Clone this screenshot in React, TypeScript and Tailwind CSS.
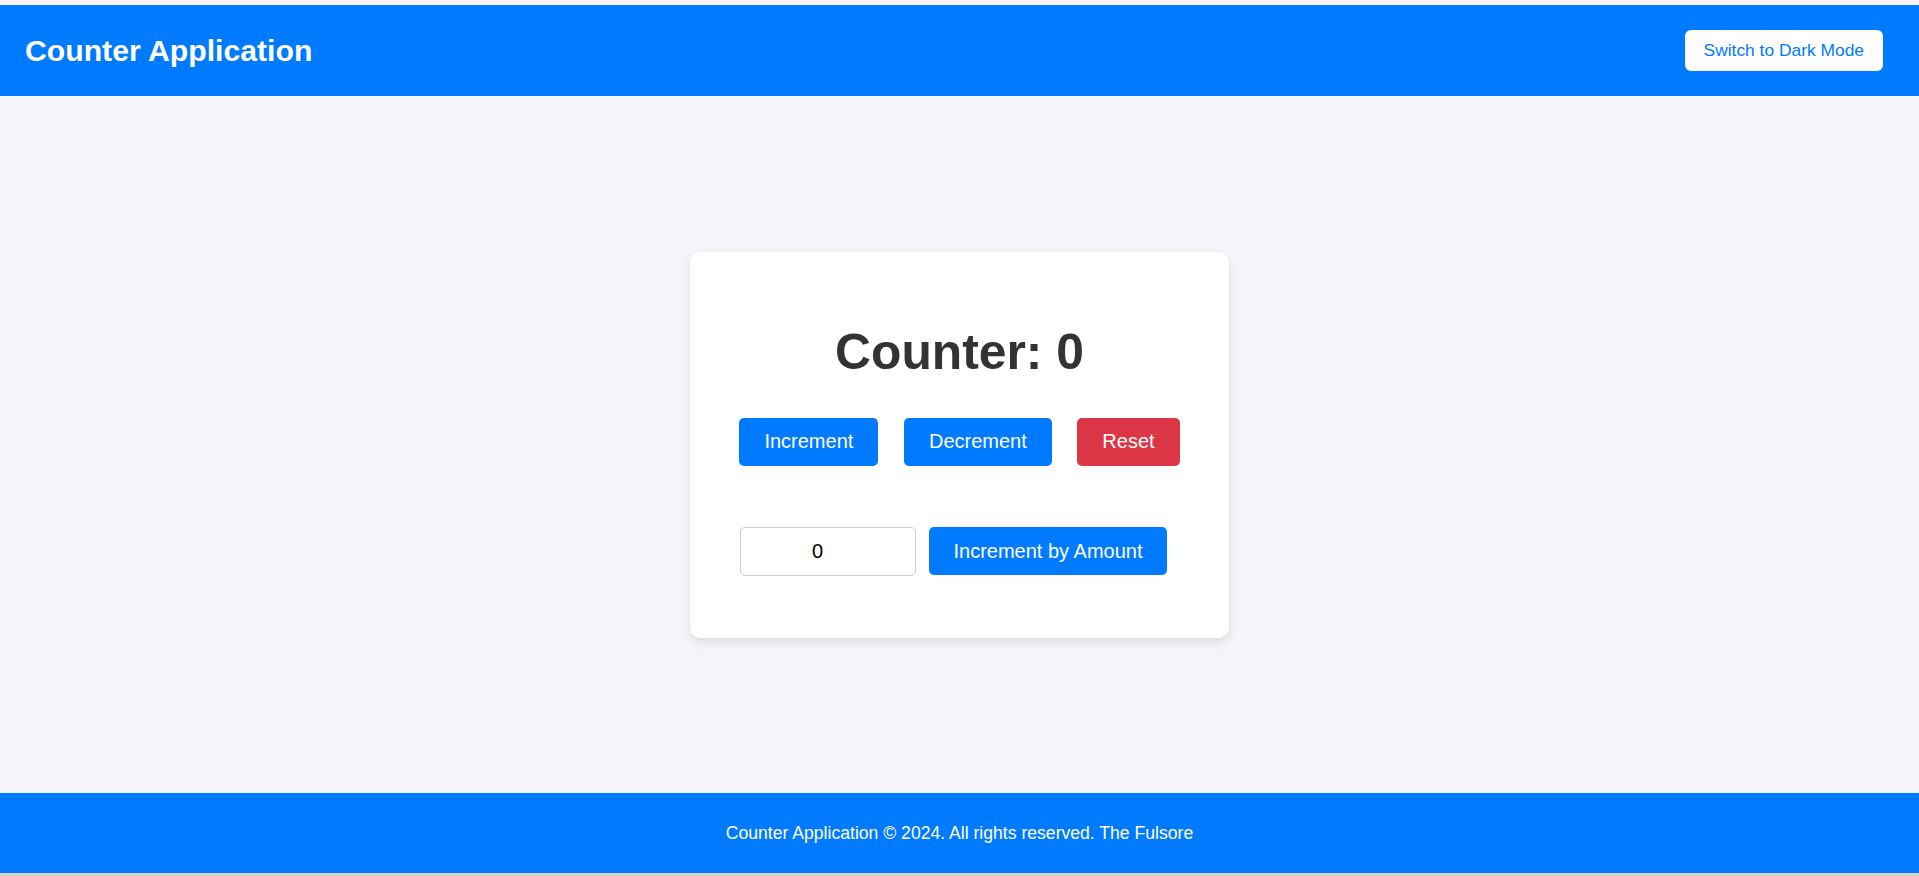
import React, { useState } from 'react';

const App: React.FC = () => {
  const [count, setCount] = useState(0);
  const [amount, setAmount] = useState('0');
  const [darkMode, setDarkMode] = useState(false);

  const font = { fontFamily: '"Liberation Sans", Arial, sans-serif' };

  return (
    <div style={font} className="flex h-screen min-h-[876px] flex-col bg-[#f4f4f9]">
      <div className="h-[5px] shrink-0 bg-[#fdf3f8]" />

      <header className="flex h-[91px] shrink-0 items-center justify-between bg-[#007bff] pl-[25px] pr-[36px]">
        <h1 className="text-[30.2px] font-bold leading-[34px] text-white">Counter Application</h1>
        <button
          onClick={() => setDarkMode(!darkMode)}
          className="rounded-[6px] bg-white px-[19px] py-[10px] text-[17.4px] leading-[21px] text-[#007bff]"
        >
          {darkMode ? 'Switch to Light Mode' : 'Switch to Dark Mode'}
        </button>
      </header>

      <main className="flex flex-1 items-center justify-center">
        <div className="w-[539px] rounded-[10px] bg-white px-[40px] pb-[62px] pt-[40px] shadow-[0_4px_10px_rgba(0,0,0,0.1)]">
          <h1 className="mb-[38px] mt-[32px] text-center text-[49.8px] font-bold leading-[56px] text-[#333]">
            Counter: {count}
          </h1>

          <div className="flex justify-center gap-[25.6px]">
            <button
              onClick={() => setCount(count + 1)}
              className="rounded-[5px] bg-[#007bff] px-[25px] py-[12.5px] text-[20px] leading-[23px] text-white"
            >
              Increment
            </button>
            <button
              onClick={() => setCount(count - 1)}
              className="rounded-[5px] bg-[#007bff] px-[25px] py-[12.5px] text-[20px] leading-[23px] text-white"
            >
              Decrement
            </button>
            <button
              onClick={() => setCount(0)}
              className="rounded-[5px] bg-[#dc3545] px-[25px] py-[12.5px] text-[20px] leading-[23px] text-white"
            >
              Reset
            </button>
          </div>

          <div className="mt-[61px] flex items-center justify-center">
            <input
              type="text"
              value={amount}
              onChange={(e) => setAmount(e.target.value)}
              className="h-[49px] w-[176px] rounded-[5px] border border-[#ccc] bg-white pl-[10px] pr-[30px] text-center text-[20px] text-black outline-none"
            />
            <button
              onClick={() => setCount(count + (parseInt(amount, 10) || 0))}
              className="ml-[13px] mr-[12px] rounded-[5px] bg-[#007bff] px-[25px] py-[12.5px] text-[20px] leading-[23px] text-white"
            >
              Increment by Amount
            </button>
          </div>
        </div>
      </main>

      <footer className="flex h-[80px] shrink-0 items-center justify-center bg-[#007bff]">
        <p className="text-[17.6px] leading-[20px] text-white">
          Counter Application © 2024. All rights reserved. The Fulsore
        </p>
      </footer>
      <div className="h-[3px] shrink-0 bg-[#d6d3ce]" />
    </div>
  );
};

export default App;
